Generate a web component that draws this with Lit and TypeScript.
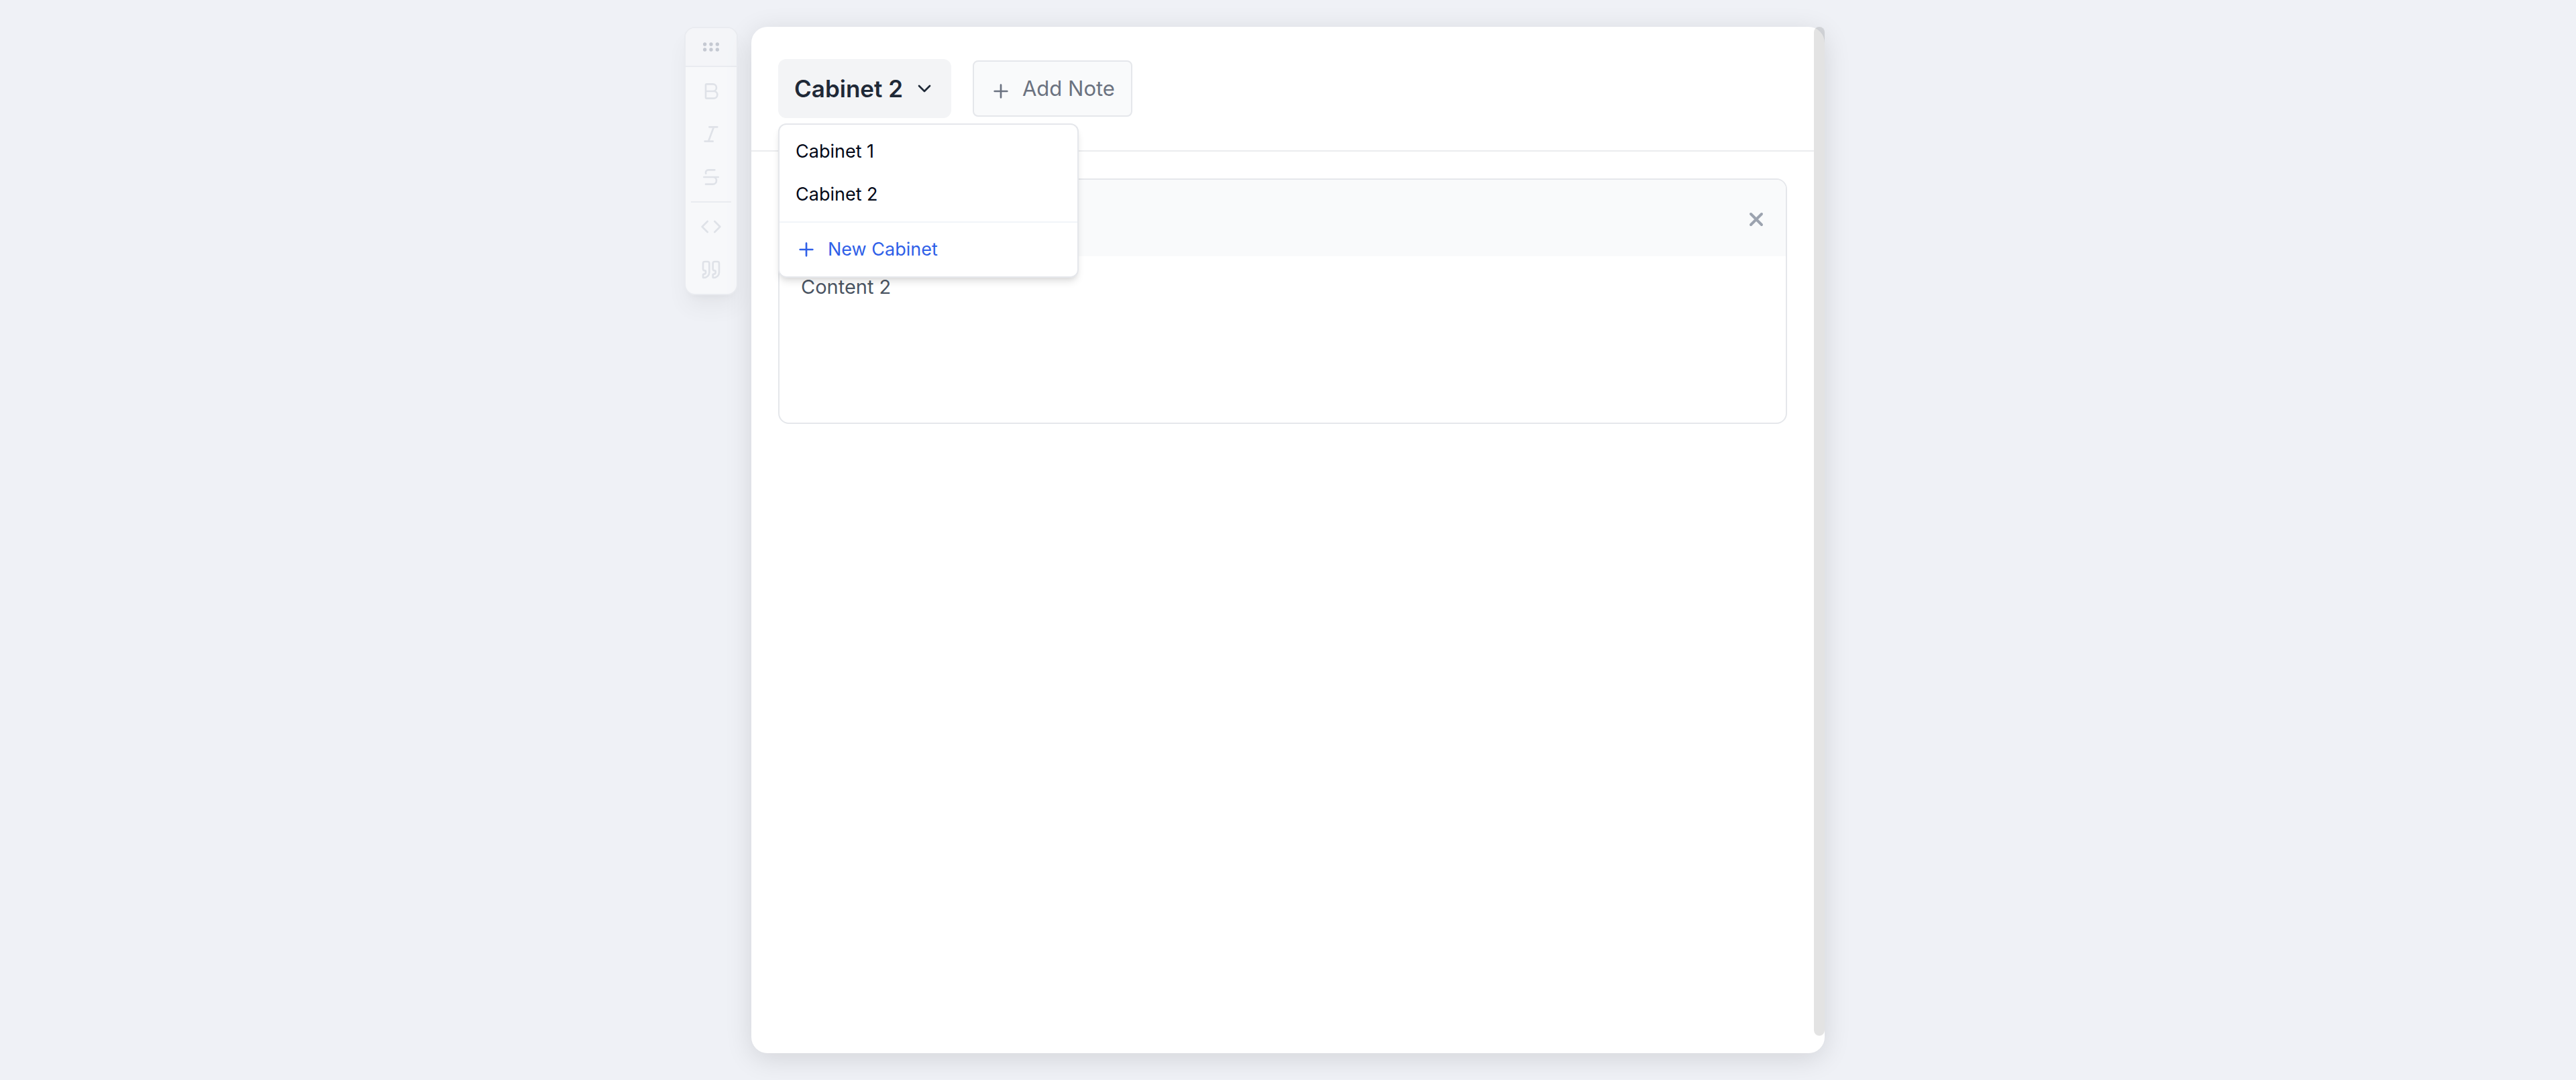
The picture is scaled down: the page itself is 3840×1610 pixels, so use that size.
import { LitElement, html, css, svg } from "lit";
import { customElement, state } from "lit/decorators.js";

const icons = {
  grip: svg`<circle cx="12" cy="9" r="1"/><circle cx="19" cy="9" r="1"/><circle cx="5" cy="9" r="1"/><circle cx="12" cy="15" r="1"/><circle cx="19" cy="15" r="1"/><circle cx="5" cy="15" r="1"/>`,
  bold: svg`<path d="M6 12h9a4 4 0 0 1 0 8H7a1 1 0 0 1-1-1V5a1 1 0 0 1 1-1h7a4 4 0 0 1 0 8"/>`,
  italic: svg`<path d="M19 4h-9M14 20H5M15 4 9 20"/>`,
  strike: svg`<path d="M16 4H9a3 3 0 0 0-2.83 4M14 12a4 4 0 0 1 0 8H6M4 12h16"/>`,
  code: svg`<path d="m16 18 6-6-6-6M8 6l-6 6 6 6"/>`,
  quote: svg`<path d="M16 3a2 2 0 0 0-2 2v6a2 2 0 0 0 2 2 1 1 0 0 1 1 1v1a2 2 0 0 1-2 2 1 1 0 0 0-1 1v2a1 1 0 0 0 1 1 6 6 0 0 0 6-6V5a2 2 0 0 0-2-2zM5 3a2 2 0 0 0-2 2v6a2 2 0 0 0 2 2 1 1 0 0 1 1 1v1a2 2 0 0 1-2 2 1 1 0 0 0-1 1v2a1 1 0 0 0 1 1 6 6 0 0 0 6-6V5a2 2 0 0 0-2-2z"/>`,
  chevron: svg`<path d="m6 9 6 6 6-6"/>`,
  plus: svg`<path d="M5 12h14M12 5v14"/>`,
  close: svg`<path d="M18 6 6 18M6 6l12 12"/>`,
};

const icon = (name: keyof typeof icons) =>
  html`<svg class="icon" viewBox="0 0 24 24" aria-hidden="true">${icons[name]}</svg>`;

@customElement("app-root")
export class AppRoot extends LitElement {
  static styles = css`
    :host {
      display: block;
      min-height: 100vh;
      box-sizing: border-box;
      padding: 40px;
      background: #eff1f6;
      font-family: Inter, "Liberation Sans", sans-serif;
      font-size: 27px;
      line-height: 40px;
      color: #020817;
    }
    * {
      box-sizing: border-box;
    }
    button {
      font: inherit;
      color: inherit;
      background: none;
      border: 0;
      margin: 0;
      padding: 0;
      cursor: pointer;
    }
    .icon {
      display: block;
      flex: none;
      width: 32px;
      height: 32px;
      fill: none;
      stroke: currentColor;
      stroke-width: 2;
      stroke-linecap: round;
      stroke-linejoin: round;
    }
    .layout {
      display: grid;
      grid-template-columns: 1fr minmax(0, 1600px) 1fr;
      column-gap: 20px;
      min-height: calc(100vh - 80px);
    }
    .toolbar {
      justify-self: end;
      align-self: start;
      width: 80px;
      border: 2px solid #e5e7eb;
      border-radius: 16px;
      background: #ffffff;
      box-shadow: 0 20px 30px -6px rgba(0, 0, 0, 0.1), 0 8px 12px -8px rgba(0, 0, 0, 0.1);
      overflow: hidden;
      opacity: 0.5;
    }
    .grip {
      display: flex;
      justify-content: center;
      padding: 12px 0;
      background: #f9fafb;
      border-bottom: 2px solid #e5e7eb;
      color: #9ca3af;
    }
    .tools {
      display: flex;
      flex-direction: column;
      gap: 4px;
      padding: 4px 8px;
      color: #d1d5db;
    }
    .group {
      display: flex;
      flex-direction: column;
    }
    .tool {
      display: grid;
      place-items: center;
      height: 64px;
    }
    .rule {
      height: 2px;
      background: #e5e7eb;
    }
    .panel {
      display: flex;
      border-radius: 24px;
      background: #ffffff;
      box-shadow: 0 8px 40px rgba(0, 0, 0, 0.12);
    }
    .main {
      flex: 1;
      min-width: 0;
    }
    .scrollbar {
      width: 16px;
      margin-bottom: 26px;
      border-radius: 8px;
      background: rgba(0, 0, 0, 0.11);
    }
    .head {
      display: flex;
      align-items: center;
      gap: 32px;
      padding: 48px 40px;
      border-bottom: 2px solid #ebecee;
    }
    .picker {
      position: relative;
    }
    .current {
      display: flex;
      align-items: center;
      gap: 16px;
      height: 88px;
      padding: 0 24px;
      border-radius: 12px;
      background: #f3f4f6;
      color: #1f2937;
      font-size: 35px;
      font-weight: 600;
    }
    .menu {
      position: absolute;
      top: 96px;
      left: 0;
      width: 448px;
      border: 2px solid #e5e7eb;
      border-radius: 12px;
      background: #ffffff;
      box-shadow: 0 8px 12px -2px rgba(0, 0, 0, 0.1), 0 4px 8px -4px rgba(0, 0, 0, 0.1);
    }
    .section {
      padding: 8px 0;
    }
    .section + .section {
      border-top: 2px solid #f1f5f9;
    }
    .item {
      display: flex;
      align-items: center;
      gap: 16px;
      width: 100%;
      height: 64px;
      padding: 0 24px;
      text-align: left;
    }
    .create {
      color: #2f5fe8;
    }
    .add {
      display: flex;
      align-items: center;
      gap: 16px;
      height: 84px;
      padding: 0 24px;
      border: 2px solid #e5e7eb;
      border-radius: 8px;
      background: #f9fafb;
      color: #6b7280;
      font-size: 31px;
    }
    .add .icon {
      margin-top: 8px;
    }
    .notes {
      padding: 40px;
    }
    .note {
      border: 2px solid #e5e7eb;
      border-radius: 16px;
      overflow: hidden;
    }
    .note-head {
      display: flex;
      align-items: center;
      justify-content: flex-end;
      height: 114px;
      padding: 4px 28px 0;
      background: #f9fafb;
      color: #9ca3af;
    }
    .close .icon {
      stroke-width: 3;
    }
    .note-body {
      min-height: 248px;
      padding: 24px 32px;
      color: #4b5563;
      line-height: 44px;
      font-size: 29px;
    }
  `;

  @state() private open = true;
  @state() private current = "Cabinet 2";
  @state() private hasNote = true;

  private cabinets = ["Cabinet 1", "Cabinet 2"];

  private pick(name: string) {
    this.current = name;
    this.open = false;
  }

  private tool(name: keyof typeof icons, label: string) {
    return html`<button class="tool" aria-label=${label}>${icon(name)}</button>`;
  }

  render() {
    return html`
      <div class="layout">
        <aside class="toolbar" role="toolbar" aria-label="Formatting">
          <div class="grip">${icon("grip")}</div>
          <div class="tools">
            <div class="group">
              ${this.tool("bold", "Bold")} ${this.tool("italic", "Italic")}
              ${this.tool("strike", "Strikethrough")}
            </div>
            <div class="rule"></div>
            <div class="group">
              ${this.tool("code", "Code")} ${this.tool("quote", "Quote")}
            </div>
          </div>
        </aside>
        <main class="panel">
          <div class="main">
            <header class="head">
              <div class="picker">
                <button
                  class="current"
                  aria-expanded=${this.open ? "true" : "false"}
                  @click=${() => (this.open = !this.open)}
                >
                  ${this.current} ${icon("chevron")}
                </button>
                ${this.open
                  ? html`<div class="menu">
                      <div class="section">
                        ${this.cabinets.map(
                          (name) => html`<button class="item" @click=${() => this.pick(name)}>${name}</button>`
                        )}
                      </div>
                      <div class="section">
                        <button class="item create">${icon("plus")} New Cabinet</button>
                      </div>
                    </div>`
                  : null}
              </div>
              <button class="add" @click=${() => (this.hasNote = true)}>${icon("plus")} Add Note</button>
            </header>
            <section class="notes">
              ${this.hasNote
                ? html`<article class="note">
                    <div class="note-head">
                      <button class="close" aria-label="Delete note" @click=${() => (this.hasNote = false)}>
                        ${icon("close")}
                      </button>
                    </div>
                    <div class="note-body">Content 2</div>
                  </article>`
                : null}
            </section>
          </div>
          <div class="scrollbar"></div>
        </main>
      </div>
    `;
  }
}
